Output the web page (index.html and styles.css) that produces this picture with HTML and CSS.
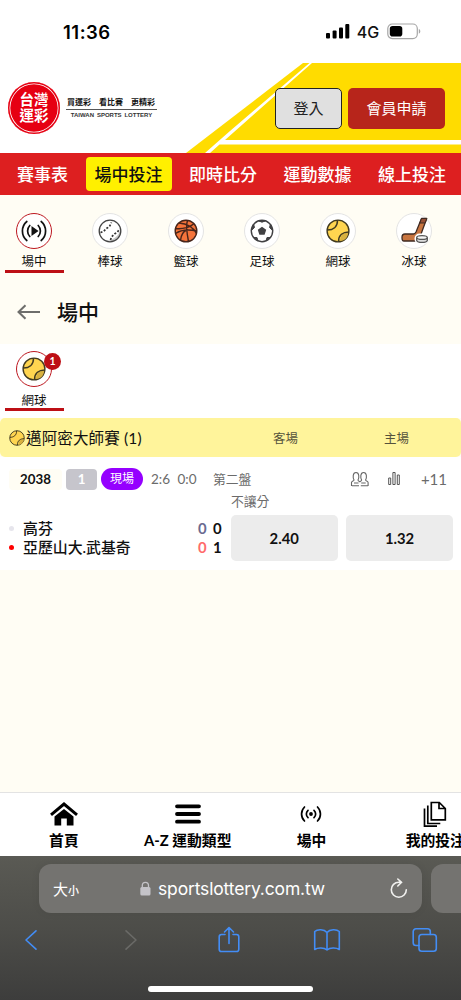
FILE: index.html
```html
<!DOCTYPE html>
<html lang="zh-Hant">
<head>
<meta charset="utf-8">
<meta name="viewport" content="width=device-width">
<title>台灣運彩</title>
<link rel="stylesheet" href="styles.css">
</head>
<body>
<svg class="defs" width="0" height="0">
  <symbol id="tennis" viewBox="0 0 24 24">
    <circle cx="12" cy="12" r="10.9" fill="#ffd550" stroke="#413a20" stroke-width="1.4"/>
    <path d="M14 22c0-5 3-8 8-8.500C22 18 19 22 14 22z" fill="#d8b13f"/>
    <path d="M1.500 11C7 11 11.500 8 11.500 1.200M12.500 22.700C12.500 16 17 13 22.700 13" fill="none" stroke="#413a20" stroke-width="1.500"/>
  </symbol>
</svg>
<div class="phone">
  <div class="status">
    <time class="clock">11:36</time>
    <div class="signals">
      <svg width="24" height="16" viewBox="0 0 24 16"><rect x="0" y="10" width="4" height="5.500" rx="1"/><rect x="6.600" y="7.500" width="4" height="8" rx="1"/><rect x="13" y="4.500" width="4" height="11" rx="1"/><rect x="19.300" y="1" width="4" height="14.500" rx="1"/></svg>
      <span class="net">4G</span>
      <svg width="34" height="17" viewBox="0 0 34 17"><rect x=".8" y="1" width="29.500" height="14.600" rx="4.500" fill="none" stroke="#a6a6a6" stroke-width="1.200"/><rect x="2.800" y="3" width="12.500" height="10.600" rx="2.800"/><path d="M31.800 6c2 .7 2 4 0 4.700z" fill="#a6a6a6"/></svg>
    </div>
  </div>

  <header class="masthead">
    <svg class="art" viewBox="0 63 461 90"><path d="M303 63H461V153H186Z" fill="#ffdc00"/><path d="M309.500 63h2.500L225 140H461V144.600H219.500L210 153H205L230 131Z" fill="#fff"/></svg>
    <div class="brand">
      <div class="seal"><span>台灣</span><span>運彩</span></div>
      <div class="motto">
        <div class="motto-zh"><span>買運彩</span><span>看比賽</span><span>更精彩</span></div>
        <div class="motto-en">TAIWAN SPORTS LOTTERY</div>
      </div>
    </div>
    <div class="account"><button class="login">登入</button><button class="join">會員申請</button></div>
  </header>

  <nav class="tabs"><a>賽事表</a><a class="current">場中投注</a><a>即時比分</a><a>運動數據</a><a>線上投注</a></nav>

  <section class="sports">
    <div class="sport selected"><div class="disc"><svg width="28" height="24" viewBox="0 0 28 24" fill="none" stroke="#111" stroke-width="1.700"><path d="M11.500 7v10l7-5z" fill="#111" stroke="none"/><path d="M9.800 6.500a8 8 0 0 0 0 11M18.200 6.500a8 8 0 0 1 0 11M6.800 2.500a12.500 12.500 0 0 0 0 19M21.200 2.500a12.500 12.500 0 0 1 0 19" stroke-linecap="round"/></svg></div><span>場中</span></div>
    <div class="sport"><div class="disc"><svg width="24" height="24" viewBox="0 0 24 24" fill="none"><path d="M22 11c-1 6-6 9-12 11 7 2 14-4 12-11z" fill="#c9c9c9"/><circle cx="12" cy="12" r="10.800" stroke="#444" stroke-width="1.300"/><path d="M2.500 13.500l3-1 3-3 3-2 2-4M12.500 21l1-3 3-3 3-2 2-3" stroke="#333" stroke-width="1.700" stroke-dasharray="2 1.700"/></svg></div><span>棒球</span></div>
    <div class="sport"><div class="disc"><svg width="24" height="24" viewBox="0 0 24 24" fill="none" stroke="#47251b" stroke-width="1.400"><circle cx="12" cy="12" r="10.800" fill="#f5743b"/><path d="M13.500 1.200C11.500 7 13 15 14.500 22.500M1.500 9.500C9 10.500 17 8 20 4.500M5 4C12 4.500 19 8 22.500 14.500M1.500 14.500C8 10 16 10.500 22.700 12M6.500 21.500C7 16 9 12.500 13 11"/></svg></div><span>籃球</span></div>
    <div class="sport"><div class="disc"><svg width="24" height="24" viewBox="0 0 24 24" fill="none" stroke="#414143"><circle cx="12" cy="12" r="10.700" stroke-width="1.400"/><path d="M12 7.800l4.200 3-1.600 5H9.400l-1.600-5z" fill="#414143" stroke-width="0"/><path d="M8.500 1.800h7l-3.500 1.400zM1.300 11.500L3.500 5 4.500 8.500zM22.700 11.500L20.500 5 19.500 8.500zM4 18.500l4 3.500-1-3.500zM20 18.500L16 22l1-3.500z" fill="#414143"/></svg></div><span>足球</span></div>
    <div class="sport"><div class="disc"><svg width="24" height="24"><use href="#tennis"/></svg></div><span>網球</span></div>
    <div class="sport"><div class="disc"><svg class="hockey" width="28" height="27" viewBox="0 0 28 27" fill="none" stroke="#3e2a22" stroke-width="1.300" stroke-linejoin="round"><path d="M20.500 1.500h5.200L19.500 18.500c-1.500 3.500-3 5.500-5.500 5.500H3c-1.500 0-2-1.200-2-3.500s1-3.500 3-3.500h8.500c1.500 0 2-1 2.500-2z" fill="#c87540"/><path d="M20.500 1.500h5.200l-1.500 4.500h-5.400z" fill="#985035" stroke-width="1"/><rect x="13.500" y="16.500" width="14.500" height="10.500" rx="5" fill="#fff" stroke="none"/><path d="M15.700 20.500v3c1 2.600 9.600 2.600 10.600 0v-3" fill="#ddd" stroke="#555"/><ellipse cx="21" cy="20.500" rx="5.300" ry="1.900" fill="#f5f5f5" stroke="#555"/></svg></div><span>冰球</span></div>
  </section>

  <div class="heading"><svg width="24" height="18" viewBox="0 0 24 18" fill="none" stroke="#6e6e6b" stroke-width="2"><path d="M23 9H2M8.500 2.200L1.500 9l7 6.800"/></svg><h1>場中</h1></div>

  <section class="filter">
    <div class="sport selected"><div class="disc"><svg width="24" height="24"><use href="#tennis"/></svg><b class="badge">1</b></div><span>網球</span></div>
  </section>

  <div class="league">
    <div class="league-name"><svg width="16" height="16"><use href="#tennis"/></svg><span>邁阿密大師賽 (1)</span></div>
    <span class="side">客場</span><span class="side">主場</span>
  </div>

  <article class="match">
    <div class="meta">
      <span class="number">2038</span><span class="tag">1</span><span class="live">現場</span>
      <span class="sets">2:6</span><span class="sets">0:0</span><span class="period">第二盤</span>
      <svg class="people" width="20" height="16" viewBox="0 0 20 16" fill="none" stroke="#666" stroke-width="1.100"><path d="M1.500 15v-3.500c0-1.500 2.500-1.500 2.500-2.500C2.800 7 2.500 1.500 6 1.500S9.200 7 8 9c0 .8 1 1.200 1.800 1.700.8-.5 1.800-.9 1.800-1.700-1.200-2-1.500-7.500 2-7.500s3.200 5.500 2 7.500c0 1 2.500 1 2.500 2.500V15M4 12h4.500M11.200 12h4.500M2 14.800h7M10.800 14.800H18"/></svg>
      <svg class="chart" width="12" height="15" viewBox="0 0 12 15" fill="none" stroke="#555"><path d="M.7 7h2v6.500h-2zM4.900 1.500h2.200v12H4.900zM9.300 4h2v9.500h-2z"/></svg>
      <span class="more">+11</span>
    </div>
    <div class="market">不讓分</div>
    <div class="contest">
      <div class="teams">
        <div class="team"><i></i><span class="team-name">高芬</span><b class="points">0</b><b class="games">0</b></div>
        <div class="team serving"><i></i><span class="team-name">亞歷山大.武基奇</span><b class="points">0</b><b class="games">1</b></div>
      </div>
      <button class="odds">2.40</button><button class="odds">1.32</button>
    </div>
  </article>

  <main class="blank"></main>

  <nav class="dock">
    <a><svg width="28" height="24" viewBox="0 0 28 24"><path d="M4.500 14.500L14 7l9.500 7.500V23.500h-6.700v-7h-5.600v7H4.500z"/><path d="M1 12.800L14 2l13 10.800" fill="none" stroke="#000" stroke-width="3"/></svg><span>首頁</span></a>
    <a><svg width="28" height="24" viewBox="0 0 28 24" stroke="#000" stroke-width="3.800" stroke-linecap="round"><path d="M3 4.300h22M3 12h22M3 19.700h22"/></svg><span>A-Z 運動類型</span></a>
    <a><svg width="28" height="24" viewBox="0 0 28 24" fill="none" stroke="#000" stroke-width="1.700" stroke-linecap="round"><circle cx="14" cy="12" r="1.900" fill="#000" stroke="none"/><path d="M11 8.300a5 5 0 0 0 0 7.400M17 8.300a5 5 0 0 1 0 7.400M7.500 5a9.800 9.800 0 0 0 0 14M20.500 5a9.800 9.800 0 0 1 0 14"/></svg><span>場中</span></a>
    <a><svg width="28" height="26" viewBox="0 0 28 26" fill="none" stroke="#000" stroke-width="1.700"><path d="M10.300 1.500h8l6 6v11.300h-14zM18 1.500v6h6M6.800 4.500v18h12.500M3.500 7.500v17.700h12.500"/></svg><span>我的投注</span></a>
  </nav>

  <footer class="browser">
    <div class="address-row">
      <div class="address">
        <span class="text-size">大<small>小</small></span>
        <div class="site"><svg width="11" height="15" viewBox="0 0 11 15"><rect x=".3" y="6" width="10.200" height="8.500" rx="1.500" fill="#c4c3c8"/><path d="M2.300 7V4.500c0-4.300 6.200-4.300 6.200 0V7" fill="none" stroke="#c4c3c8" stroke-width="1.300"/></svg><span>sportslottery.com.tw</span></div>
        <svg class="reload" width="18" height="22" viewBox="0 0 18 22" fill="none" stroke="#f1f1ef" stroke-width="1.600"><path d="M16.300 11.700a7.500 7.500 0 1 1-7.500-7.500h2.700M7.800 1l3.700 3.300-3.700 3.700" stroke-linecap="round"/></svg>
      </div>
      <div class="next-tab"></div>
    </div>
    <div class="tools">
      <svg viewBox="0 0 28 28"><path d="M18 4.800L8 14l10 9.200"/></svg>
      <svg class="dim" viewBox="0 0 28 28"><path d="M10 4.800L20 14l-10 9.200"/></svg>
      <svg viewBox="0 0 28 28"><path d="M10 8.500H6.500a2.300 2.300 0 0 0-2.300 2.300v12.400a2.300 2.300 0 0 0 2.300 2.300h15a2.300 2.300 0 0 0 2.300-2.300V10.800a2.300 2.300 0 0 0-2.300-2.300H18M14 17.500V1.500M9.500 6L14 1.500 18.500 6"/></svg>
      <svg viewBox="0 0 28 28"><path d="M14 6.500C11 3 4.500 3 1.700 5.500v18c3-2 9.500-2 12.300.5 2.800-2.500 9.300-2.500 12.300-.5v-18C23.500 3 17 3 14 6.500zV24"/></svg>
      <svg viewBox="0 0 28 28"><rect x="8" y="8.500" width="17.300" height="16.800" rx="2.800"/><path d="M8 19.500H5a2.800 2.800 0 0 1-2.800-2.800V5.600A2.800 2.800 0 0 1 5 2.800h11.500a2.800 2.800 0 0 1 2.800 2.800v2.900"/></svg>
    </div>
    <div class="home-bar"></div>
  </footer>
</div>
</body>
</html>
```

FILE: styles.css
```css
* { box-sizing: border-box; }
body { margin: 0; font-family: Lato, "Noto Sans CJK TC", sans-serif; color: #111; }
button { font: inherit; border: 0; padding: 0; }
svg { display: block; flex: none; }
.defs { position: absolute; }
.phone { width: 461px; height: 1000px; overflow: hidden; display: flex; flex-direction: column; background: #fffdf4; }
.phone > * { flex: none; }

.status { height: 63px; background: #fff; padding: 0 40px 0 63px; display: flex; justify-content: space-between; }
.clock { font: 600 18.500px/24px Inter, sans-serif; letter-spacing: .5px; padding-top: 20px; color: #000; }
.signals { display: flex; align-items: center; height: 62px; }
.net { font: 500 16px/20px Inter, sans-serif; margin: 1px 8px 0 7px; letter-spacing: -.1px; }

.masthead { position: relative; height: 90px; background: #fff; display: flex; justify-content: space-between; align-items: center; padding: 0 16px 0 8px; }
.art { position: absolute; inset: 0; width: 461px; height: 90px; }
.brand, .account { position: relative; display: flex; align-items: center; }
.brand { gap: 6px; }
.seal { width: 52px; height: 52px; border-radius: 50%; background: #e60012; display: flex; flex-direction: column; align-items: center; justify-content: center; color: #fff; font-weight: 700; font-size: 14.500px; line-height: 15.500px; padding-bottom: 1px; box-shadow: inset 0 0 0 1.500px #e60012, inset 0 0 0 2.300px #fff; }
.motto { width: 91px; }
.motto-zh { display: flex; justify-content: space-between; padding: 0 2px 0 1px; font-weight: 700; font-size: 8px; line-height: 13px; border-bottom: 1px solid #555; }
.motto-en { font: 700 6px/11px "Liberation Sans", sans-serif; text-align: center; white-space: nowrap; word-spacing: 1.200px; color: #333; }
.account { gap: 6px; }
.account button { height: 41px; border-radius: 5px; font-size: 15px; line-height: 38px; }
.login { width: 67px; background: #e0e0e0; border: 1px solid #222; color: #222; }
.account .join { width: 97px; background: #b7251b; color: #fff; }

.tabs { height: 42px; background: #dd1f20; padding: 4px 6px 0 8px; display: flex; justify-content: space-between; }
.tabs a { height: 34px; padding: 0 9px; border-radius: 4px; font-weight: 500; font-size: 17px; line-height: 35px; color: #fff; white-space: nowrap; }
.tabs .current { background: #fff000; color: #111; }

.sports { height: 85px; display: flex; gap: 17px; padding: 17.500px 0 0 4.500px; }
.sport { width: 59px; height: 60px; display: flex; flex-direction: column; align-items: center; font-size: 12.500px; border-bottom: 3px solid transparent; }
.sport > span { line-height: 18px; margin-top: 4px; }
.selected { border-color: #bd0f15; }
.disc { position: relative; width: 36px; height: 36px; flex: none; border-radius: 50%; border: 1px solid #e4e4e4; background: #fff; display: flex; align-items: center; justify-content: center; }
.selected .disc { border-color: #bd1820; }
.hockey { margin-left: 1px; }
.badge { position: absolute; left: 27px; top: .5px; width: 17px; height: 17px; border-radius: 50%; background: #bd0f15; color: #fff; font-size: 10.500px; line-height: 16px; text-align: center; }

.heading { height: 64px; padding-left: 17px; display: flex; align-items: center; gap: 16px; }
.heading h1 { margin: 0; font-size: 21px; line-height: 30px; font-weight: 500; }
.filter { height: 74px; background: #fff; padding: 7px 0 0 4.500px; }
.filter .sport > span { margin-top: 5px; }

.league { height: 39px; background: #fff49b; border-radius: 5px; display: grid; grid-template-columns: 230px 111px 111px; align-items: center; }
.league-name { display: flex; align-items: center; padding-left: 9px; font-size: 15.500px; line-height: 22px; letter-spacing: .15px; gap: 1px; white-space: nowrap; }
.side { text-align: center; font-size: 12.500px; color: #55523b; }

.match { height: 113px; background: #fff; padding: 10px 8px 0 9px; color: #6b6b6b; }
.meta { display: flex; align-items: center; height: 24px; font-size: 13.300px; white-space: nowrap; }
.number { width: 53px; line-height: 21px; background: #fffdf4; border-radius: 4px; text-align: center; color: #111; font-weight: 700; }
.tag { width: 31px; margin: 0 4px; line-height: 21px; background: #c6c5cc; border-radius: 4px; text-align: center; color: #fff; font-weight: 700; }
.live { width: 42px; height: 22px; line-height: 21px; background: #9500ff; border-radius: 11px; text-align: center; color: #fff; font-size: 12px; margin-right: 8px; }
.sets { width: 26.500px; font-size: 13.500px; }
.period { margin: -2px 0 0 9px; width: 137px; font-size: 12.800px; }
.chart { margin: -1px 0 0 18px; }
.more { margin-left: auto; padding-right: 6px; font-size: 15px; }
.market { padding-left: 222px; font-size: 12.800px; line-height: 20px; height: 24px; }
.contest { display: flex; gap: 8.500px; }
.teams { width: 213.500px; padding-top: 3.500px; color: #111; }
.team { display: flex; align-items: center; height: 19.500px; font-size: 14.900px; line-height: 19px; font-weight: 500; white-space: nowrap; }
.team i { width: 5px; height: 5px; border-radius: 50%; background: #e6e5ec; margin-right: 9px; }
.team-name { width: 175px; }
.points { width: 15px; color: #6b6a91; }
.serving i { background: #f00; }
.serving .points { color: #ff6b6b; }
.odds { width: 107px; height: 46px; border-radius: 5px; background: #ececec; color: #111; font-weight: 700; font-size: 14.800px; line-height: 46px; }
.blank { height: 222px; }

.dock { height: 64px; background: #fff; border-top: 1px solid #e3e3e3; display: flex; padding-left: 2px; }
.dock a { flex: none; width: 123.800px; display: flex; flex-direction: column; align-items: center; color: #000; font-size: 14.800px; font-weight: 700; white-space: nowrap; padding-top: 9px; }
.dock span { line-height: 20px; margin-top: 3.500px; }
.dock a:last-child { padding-top: 7.500px; }
.dock a:last-child span { margin-top: 3px; }

.browser { height: 144px; background: linear-gradient(#5a5a54, #4d4d49 50%, #3d3d3c); padding-top: 8px; overflow: hidden; }
.address-row { display: flex; gap: 9px; padding-left: 39px; }
.address { flex: none; width: 383px; height: 49px; border-radius: 12px; background: #747370; color: #fff; display: flex; align-items: center; justify-content: space-between; padding: 0 14px; box-shadow: 0 0 8px #0001; }
.next-tab { flex: none; width: 60px; height: 49px; border-radius: 12px; background: #747370; }
.text-size { width: 42px; font-size: 15px; font-weight: 400; }
.text-size small { font-size: 11px; font-weight: 500; }
.site { display: flex; align-items: center; gap: 7px; font: 17.500px/24px Inter, sans-serif; letter-spacing: -.15px; }
.reload { margin-left: 20px; }
.tools { display: flex; justify-content: space-between; padding: 13px 22px 0 18px; }
.tools svg { width: 28px; height: 28px; fill: none; stroke: #438df5; stroke-width: 1.600; stroke-linejoin: round; stroke-linecap: round; }
.tools .dim { stroke: #6a6a67; }
.home-bar { width: 165px; height: 5.500px; border-radius: 3px; background: #fff; margin: 32px auto 0; }
```
